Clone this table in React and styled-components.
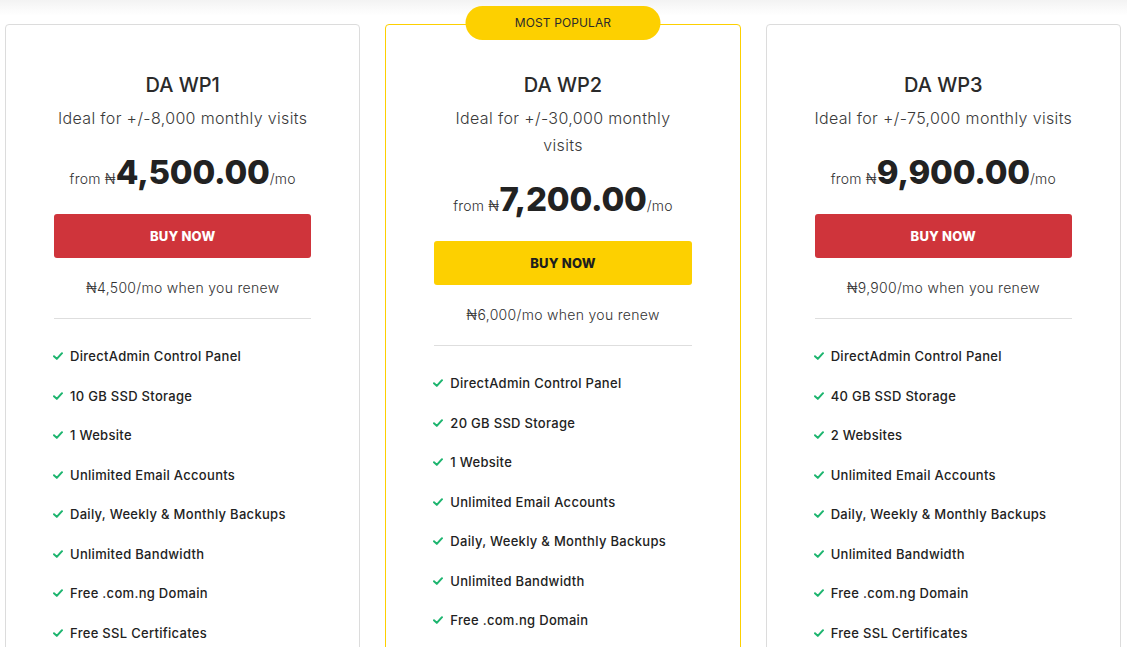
import React from "react";
import styled, { createGlobalStyle } from "styled-components";

const plans = [
    {
        name: "DA WP1",
        visits: "Ideal for +/-8,000 monthly visits",
        price: "4,500.00",
        renew: "4,500",
        storage: "10 GB SSD Storage",
        sites: "1 Website",
    },
    {
        name: "DA WP2",
        visits: "Ideal for +/-30,000 monthly visits",
        price: "7,200.00",
        renew: "6,000",
        storage: "20 GB SSD Storage",
        sites: "1 Website",
        popular: true,
    },
    {
        name: "DA WP3",
        visits: "Ideal for +/-75,000 monthly visits",
        price: "9,900.00",
        renew: "9,900",
        storage: "40 GB SSD Storage",
        sites: "2 Websites",
    },
];

const featuresFor = (plan) => [
    "DirectAdmin Control Panel",
    plan.storage,
    plan.sites,
    "Unlimited Email Accounts",
    "Daily, Weekly & Monthly Backups",
    "Unlimited Bandwidth",
    "Free .com.ng Domain",
    "Free SSL Certificates",
];

const Check = () => (
    <svg width="10" height="8" viewBox="0 0 10 8" fill="none">
        <polyline
            points="1,4.2 3.8,6.9 9,1.2"
            stroke="#1db56f"
            strokeWidth="2"
            strokeLinecap="round"
            strokeLinejoin="round"
        />
    </svg>
);

export default function App() {
    return (
        <>
            <GlobalStyle />
            <Page>
                <Grid>
                    {plans.map((plan) => (
                        <Card key={plan.name} popular={plan.popular}>
                            {plan.popular && <Badge>MOST POPULAR</Badge>}
                            <Title>{plan.name}</Title>
                            <Visits narrow={plan.popular}>{plan.visits}</Visits>
                            <Price>
                                <Small>from ₦</Small>
                                <Amount>{plan.price}</Amount>
                                <Small>/mo</Small>
                            </Price>
                            <BuyButton popular={plan.popular}>BUY NOW</BuyButton>
                            <Renew>₦{plan.renew}/mo when you renew</Renew>
                            <Divider />
                            <Features>
                                {featuresFor(plan).map((f) => (
                                    <Feature key={f}>
                                        <Check />
                                        <span>{f}</span>
                                    </Feature>
                                ))}
                            </Features>
                        </Card>
                    ))}
                </Grid>
            </Page>
        </>
    );
}

const GlobalStyle = createGlobalStyle`
    body {
        margin: 0;
        background: #fff;
        font-family: Inter, "Open Sans", sans-serif;
        color: #2a2a2a;
        overflow: hidden;
    }
`;

const Page = styled.div`
    height: 647px;
    overflow: hidden;
    padding-top: 24px;
    box-sizing: border-box;
    background: linear-gradient(to bottom, #f3f3f3 0px, #fbfbfb 10px, #fff 16px);
`;

const Grid = styled.div`
    display: grid;
    grid-template-columns: repeat(3, 1fr);
    gap: 25px;
    padding: 0 6px 0 5px;
`;

const Card = styled.div`
    position: relative;
    background: #fff;
    border: 1px solid ${(p) => (p.popular ? "#fdd000" : "#dcdcdc")};
    border-radius: 4px;
    padding: 47px 48px 0;
    height: 640px;
    text-align: center;
`;

const Badge = styled.div`
    position: absolute;
    top: -19px;
    left: 50%;
    transform: translateX(-50%);
    width: 195px;
    height: 34px;
    border-radius: 17px;
    background: #fdd000;
    color: #2b2b2b;
    font-size: 12px;
    font-weight: 400;
    line-height: 34px;
    letter-spacing: 0.1px;
`;

const Title = styled.h2`
    margin: 0;
    font-size: 20px;
    font-weight: 500;
    line-height: 26px;
    color: #2a2a2a;
`;

const Visits = styled.p`
    margin: 7px -10px 0;
    padding: 0 ${(p) => (p.narrow ? "24px" : "0")};
    white-space: ${(p) => (p.narrow ? "normal" : "nowrap")};
    font-size: 16px;
    font-weight: 300;
    line-height: 27px;
    letter-spacing: 0.35px;
    color: #3a3a3a;
`;

const Price = styled.div`
    margin-top: 19px;
    display: flex;
    justify-content: center;
    align-items: baseline;
    color: #222;
`;

const Small = styled.span`
    font-size: 14px;
    font-weight: 300;
    letter-spacing: 0.2px;
    color: #333;
`;

const Amount = styled.span`
    font-size: 33px;
    font-weight: 800;
    line-height: 42px;
    letter-spacing: -0.2px;
    color: #222;
`;

const BuyButton = styled.button`
    display: block;
    width: 100%;
    height: 44px;
    margin-top: 21px;
    border: none;
    border-radius: 3px;
    background: ${(p) => (p.popular ? "#fdd000" : "#cf343b")};
    color: ${(p) => (p.popular ? "#1e1e1e" : "#fff")};
    font-family: inherit;
    font-size: 13px;
    font-weight: 800;
    letter-spacing: 0.2px;
`;

const Renew = styled.p`
    margin: 19px 0 0;
    font-size: 14px;
    font-weight: 300;
    line-height: 22px;
    letter-spacing: 0.3px;
    color: #333;
`;

const Divider = styled.hr`
    margin: 19px 0 0;
    border: none;
    border-top: 1px solid #dedede;
`;

const Features = styled.ul`
    list-style: none;
    margin: 0;
    padding: 28px 0 0;
    display: flex;
    flex-direction: column;
    gap: 21.5px;
    text-align: left;
`;

const Feature = styled.li`
    display: flex;
    align-items: center;
    gap: 7px;
    margin-left: -1px;
    font-size: 13px;
    font-weight: 500;
    line-height: 18px;
    letter-spacing: 0.3px;
    color: #222;
`;
